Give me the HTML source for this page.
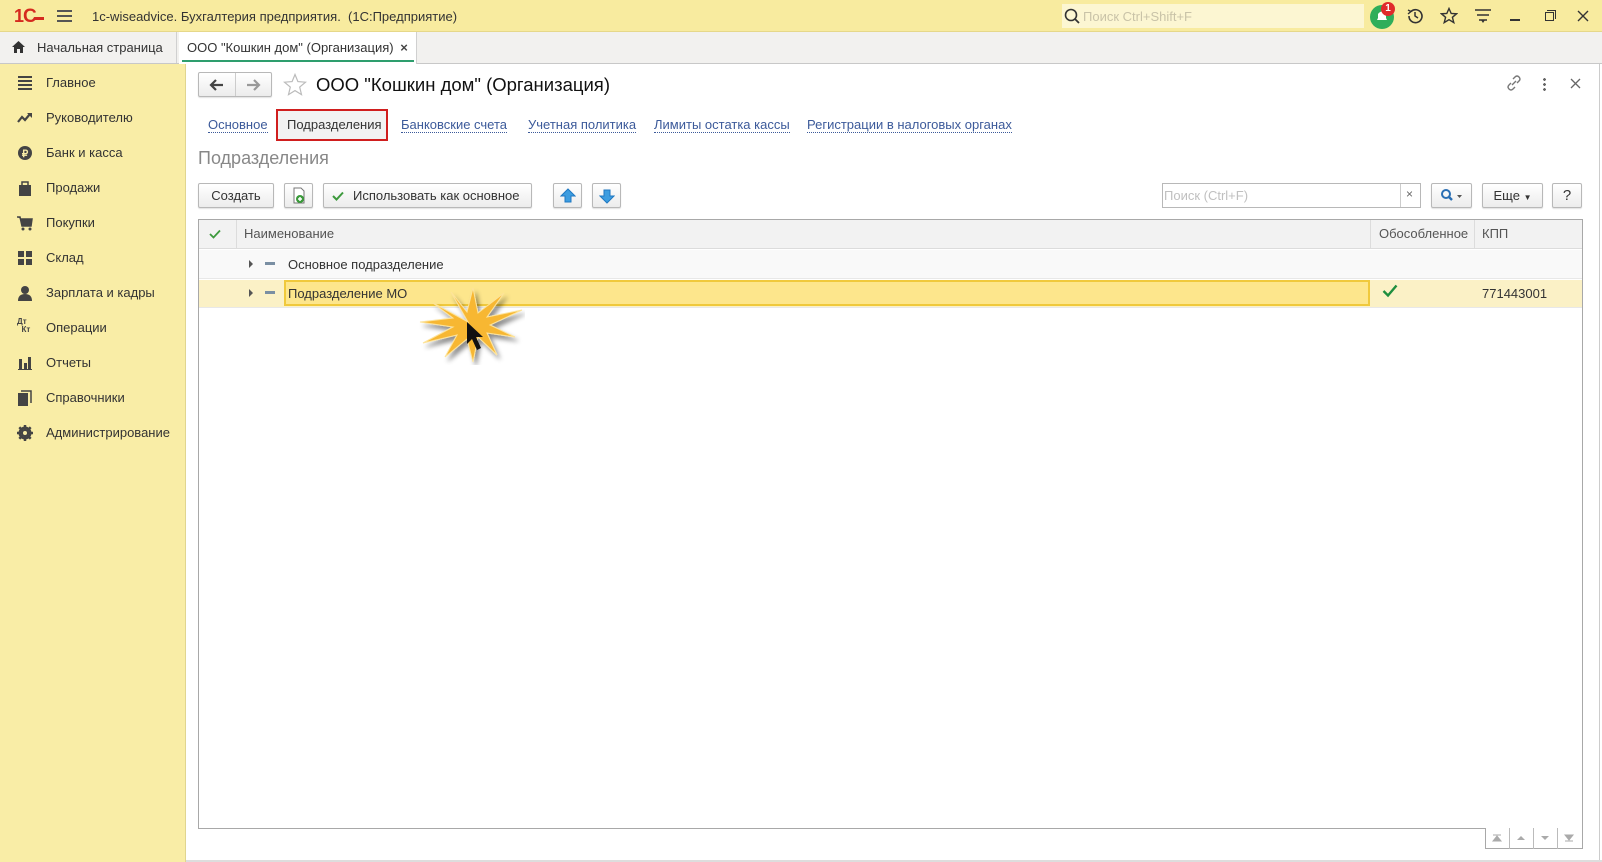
<!DOCTYPE html>
<html><head><meta charset="utf-8"><style>
*{box-sizing:border-box;margin:0;padding:0}
body{width:1602px;height:862px;overflow:hidden;background:#fff;font-family:"Liberation Sans",Arial,sans-serif;font-size:13px;color:#333;position:relative}
.abs{position:absolute}
#title{left:0;top:0;width:1602px;height:32px;background:#f8eb9f;border-bottom:1px solid #e6d88a}
#tabs{left:0;top:32px;width:1602px;height:32px;background:#f2f1ef;border-bottom:1px solid #c8c8c8}
#side{left:0;top:64px;width:186px;height:798px;background:#f9eda6;border-right:1px solid #e0d58f}
.si{position:absolute;left:46px;font-size:13px;color:#333}
.ic{position:absolute;left:17px;width:16px;height:16px}
.btn{position:absolute;height:25px;border:1px solid #b8b8b8;border-radius:2px;background:linear-gradient(#fff,#ececec);font-size:13px;color:#333;line-height:23px;text-align:center;box-shadow:0 1px 1px rgba(0,0,0,.12)}
.lk{position:absolute;top:117px;color:#3c5a9a;font-size:13px;border-bottom:1px dotted #3c5a9a;line-height:15px}
.th{position:absolute;top:219px;height:30px;line-height:30px;font-size:13px;color:#555;padding-left:8px}
</style></head><body>
<div id="title" class="abs">
 <div class="abs" style="left:14px;top:6px;font:bold 18px 'Liberation Sans';color:#d52a1f;letter-spacing:-1px">1<span style="font-size:19px">С</span><span style="display:inline-block;width:10px;height:3px;background:#d52a1f;vertical-align:2px;margin-left:-2px"></span></div>
 <div class="abs" style="left:57px;top:10px;width:15px;height:12px;border-top:2px solid #555;border-bottom:2px solid #555"><div style="margin-top:3px;height:2px;background:#555"></div></div>
 <div class="abs" style="left:92px;top:9px;font-size:13px;color:#333">1c-wiseadvice. Бухгалтерия предприятия.&nbsp; (1С:Предприятие)</div>
 <div class="abs" style="left:1062px;top:4px;width:302px;height:24px;background:#fcf6d2"></div>
 <svg class="abs" style="left:1064px;top:8px" width="16" height="16"><circle cx="7" cy="7" r="5.5" fill="none" stroke="#333" stroke-width="1.6"/><line x1="11" y1="11" x2="15" y2="15" stroke="#333" stroke-width="1.8"/></svg>
 <div class="abs" style="left:1083px;top:9px;font-size:13px;color:#c9c3a8">Поиск Ctrl+Shift+F</div>
 <div class="abs" style="left:1370px;top:5px;width:24px;height:24px;border-radius:50%;background:#2fae5a"></div>
 <svg class="abs" style="left:1374px;top:8px" width="16" height="16"><path d="M3 12 L4 10 L4 6 Q8 1 12 6 L12 10 L13 12 Z" fill="#fff"/></svg>
 <div class="abs" style="left:1381px;top:2px;width:14px;height:14px;border-radius:50%;background:#e02a2a;color:#fff;font:bold 10px 'Liberation Sans';text-align:center;line-height:14px">1</div>
 <svg class="abs" style="left:1406px;top:7px" width="18" height="18"><path d="M3 9 A6.5 6.5 0 1 0 5 4.5" fill="none" stroke="#333" stroke-width="1.6"/><path d="M2 3 L5 4.5 L2 7" fill="none" stroke="#333" stroke-width="1.4"/><path d="M9 5 L9 9 L12 11" fill="none" stroke="#333" stroke-width="1.5"/></svg>
 <svg class="abs" style="left:1440px;top:7px" width="18" height="18"><path d="M9 1.5 L11.2 6.5 L16.5 6.8 L12.4 10.3 L13.8 15.6 L9 12.7 L4.2 15.6 L5.6 10.3 L1.5 6.8 L6.8 6.5 Z" fill="none" stroke="#333" stroke-width="1.4"/></svg>
 <svg class="abs" style="left:1474px;top:8px" width="18" height="16"><path d="M1 2 H17 M3 7 H15 M5 12 H13" stroke="#333" stroke-width="1.5"/><path d="M7 12 L11 12 L9 15Z" fill="#333"/></svg>
 <div class="abs" style="left:1510px;top:19px;width:10px;height:1.5px;background:#333"></div>
 <div class="abs" style="left:1545px;top:12px;width:9px;height:9px;border:1.5px solid #333"></div><div class="abs" style="left:1547px;top:10px;width:9px;height:9px;border-top:1.5px solid #333;border-right:1.5px solid #333"></div>
 <svg class="abs" style="left:1577px;top:10px" width="12" height="12"><path d="M1 1L11 11M11 1L1 11" stroke="#333" stroke-width="1.4"/></svg>
</div>
<div id="tabs" class="abs">
 <svg class="abs" style="left:11px;top:8px" width="15" height="14"><path d="M7.5 1 L14 7 L12 7 L12 13 L9 13 L9 9 L6 9 L6 13 L3 13 L3 7 L1 7Z" fill="#333"/></svg>
 <div class="abs" style="left:37px;top:8px;font-size:13px">Начальная страница</div>
 <div class="abs" style="left:176px;top:0;width:1px;height:31px;background:#d0d0d0"></div>
 <div class="abs" style="left:179px;top:0;width:238px;height:32px;background:#fff;border-right:1px solid #d0d0d0"></div>
 <div class="abs" style="left:182px;top:28px;width:232px;height:2px;background:#2e9e6e"></div>
 <div class="abs" style="left:187px;top:8px;font-size:13px">ООО "Кошкин дом" (Организация) <b style="margin-left:3px;color:#444">×</b></div>
</div>
<div id="side" class="abs">
 <div class="si" style="top:11px">Главное</div>
 <div class="si" style="top:46px">Руководителю</div>
 <div class="si" style="top:81px">Банк и касса</div>
 <div class="si" style="top:116px">Продажи</div>
 <div class="si" style="top:151px">Покупки</div>
 <div class="si" style="top:186px">Склад</div>
 <div class="si" style="top:221px">Зарплата и кадры</div>
 <div class="si" style="top:256px">Операции</div>
 <div class="si" style="top:291px">Отчеты</div>
 <div class="si" style="top:326px">Справочники</div>
 <div class="si" style="top:361px">Администрирование</div>
 <svg class="ic" style="top:11px" width="16" height="16"><path d="M1 2H15M1 6H15M1 10H15M1 14H15" stroke="#444" stroke-width="2"/></svg>
 <svg class="ic" style="top:46px" width="16" height="16"><path d="M1 12 L5 7 L8 10 L13 4" fill="none" stroke="#444" stroke-width="2.2"/><path d="M10 3 L15 3 L15 8Z" fill="#444"/></svg>
 <svg class="ic" style="top:81px" width="16" height="16"><circle cx="8" cy="8" r="7" fill="#444"/><text x="8" y="12" font-size="10" font-weight="bold" fill="#f9eda6" text-anchor="middle" font-family="Liberation Sans">₽</text></svg>
 <svg class="ic" style="top:116px" width="16" height="16"><path d="M5 5 V2 H11 V5" fill="none" stroke="#444" stroke-width="1.5"/><rect x="2" y="5" width="12" height="11" fill="#444"/></svg>
 <svg class="ic" style="top:151px" width="16" height="16"><path d="M0 2 H3 L5 11 H14 L15 4 H4" fill="#444" stroke="#444" stroke-width="1.5"/><circle cx="6" cy="14" r="1.5" fill="#444"/><circle cx="13" cy="14" r="1.5" fill="#444"/></svg>
 <svg class="ic" style="top:186px" width="16" height="16"><path d="M1 1H7V7H1ZM9 1H15V7H9ZM1 9H7V15H1ZM9 9H15V15H9Z" fill="#444"/></svg>
 <svg class="ic" style="top:221px" width="16" height="16"><circle cx="8" cy="5" r="4" fill="#444"/><path d="M1 16 Q1 9 8 9 Q15 9 15 16Z" fill="#444"/></svg>
 <div class="abs" style="left:17px;top:254px;font:bold 8px 'Liberation Sans';color:#444;line-height:8px">Дт<br>&nbsp;&nbsp;Кт</div>
 <svg class="ic" style="top:291px" width="16" height="16"><path d="M2 4H5V14H2ZM7 8H10V14H7ZM11 2H14V14H11Z M1 14H15V15H1Z" fill="#444"/></svg>
 <svg class="ic" style="top:326px" width="16" height="16"><rect x="1" y="3" width="10" height="13" fill="#444"/><path d="M4 1H14V13" fill="none" stroke="#444" stroke-width="1.5"/></svg>
 <svg class="ic" style="top:361px" width="16" height="16"><circle cx="8" cy="8" r="5" fill="none" stroke="#444" stroke-width="3"/><path d="M8 0V16M0 8H16M2.3 2.3L13.7 13.7M13.7 2.3L2.3 13.7" stroke="#444" stroke-width="2.5"/><circle cx="8" cy="8" r="2" fill="#f9eda6"/></svg>
</div>
<!-- header -->
<div class="btn" style="left:198px;top:72px;width:74px;height:25px"></div>
<div class="abs" style="left:235px;top:73px;width:1px;height:23px;background:#ccc"></div>
<svg class="abs" style="left:209px;top:79px" width="16" height="12"><path d="M2 6H14M7 1L2 6L7 11" fill="none" stroke="#444" stroke-width="2.2"/></svg>
<svg class="abs" style="left:245px;top:79px" width="16" height="12"><path d="M2 6H14M9 1L14 6L9 11" fill="none" stroke="#999" stroke-width="2.2"/></svg>
<svg class="abs" style="left:283px;top:73px" width="24" height="24"><path d="M12 1.5 L14.9 8.6 L22.5 9.2 L16.7 14.1 L18.5 21.6 L12 17.6 L5.5 21.6 L7.3 14.1 L1.5 9.2 L9.1 8.6 Z" fill="none" stroke="#bbb" stroke-width="1.2"/></svg>
<div class="abs" style="left:316px;top:74px;font-size:18.5px;color:#111">ООО "Кошкин дом" (Организация)</div>
<svg class="abs" style="left:1506px;top:75px" width="16" height="16"><path d="M6 10 L10 6 M7 4 L9 2 Q11 0 13 2 Q15 4 13 6 L11 8 M9 12 L7 14 Q5 16 3 14 Q1 12 3 10 L5 8" fill="none" stroke="#777" stroke-width="1.4"/></svg>
<div class="abs" style="left:1543px;top:77px;width:3px;height:14px;background:radial-gradient(circle,#666 1.3px,transparent 1.5px) 0 0/3px 5px"></div>
<svg class="abs" style="left:1570px;top:78px" width="11" height="11"><path d="M1 1L10 10M10 1L1 10" stroke="#666" stroke-width="1.3"/></svg>
<!-- tabs links -->
<div class="lk" style="left:208px">Основное</div>
<div class="abs" style="left:276px;top:109px;width:112px;height:32px;border:2px solid #d01e1e;background:#f2f2f2"></div>
<div class="abs" style="left:287px;top:117px;font-size:13px;color:#333">Подразделения</div>
<div class="lk" style="left:401px">Банковские счета</div>
<div class="lk" style="left:528px">Учетная политика</div>
<div class="lk" style="left:654px">Лимиты остатка кассы</div>
<div class="lk" style="left:807px">Регистрации в налоговых органах</div>
<div class="abs" style="left:198px;top:148px;font-size:18px;color:#888">Подразделения</div>
<!-- toolbar -->
<div class="btn" style="left:198px;top:183px;width:76px">Создать</div>
<div class="btn" style="left:284px;top:183px;width:29px"><svg width="14" height="18" style="margin-top:3px"><path d="M2 1H9L12 4V16H2Z" fill="#fff" stroke="#777"/><circle cx="8" cy="12" r="4" fill="#3a9a3a"/><path d="M6 12H10M8 10V14" stroke="#fff" stroke-width="1.5"/></svg></div>
<div class="btn" style="left:323px;top:183px;width:209px;text-align:left;padding-left:29px">Использовать как основное</div>
<svg class="abs" style="left:332px;top:191px" width="12" height="10"><path d="M1 5L4.5 8.5L11 1.5" fill="none" stroke="#3d9a3d" stroke-width="2"/></svg>
<div class="btn" style="left:553px;top:183px;width:29px"><svg width="16" height="16" style="margin-top:4px"><path d="M8 1L15 8H11V14H5V8H1Z" fill="#3d9de0" stroke="#1f78c2"/></svg></div>
<div class="btn" style="left:592px;top:183px;width:29px"><svg width="16" height="16" style="margin-top:4px"><path d="M8 15L15 8H11V2H5V8H1Z" fill="#3d9de0" stroke="#1f78c2"/></svg></div>
<div class="abs" style="left:1162px;top:183px;width:259px;height:25px;border:1px solid #b8b8b8;background:#fff"></div>
<div class="abs" style="left:1164px;top:188px;color:#c0c0c0;font-size:13px">Поиск (Ctrl+F)</div>
<div class="abs" style="left:1400px;top:184px;width:1px;height:23px;background:#ccc"></div>
<div class="abs" style="left:1406px;top:187px;color:#666;font-size:12px">×</div>
<div class="btn" style="left:1431px;top:183px;width:41px"><svg width="24" height="14" style="margin-top:4px"><circle cx="6" cy="6" r="4" fill="none" stroke="#2a6fb4" stroke-width="2"/><path d="M9 9L12 12" stroke="#2a6fb4" stroke-width="2.4"/><path d="M17 7H22L19.5 10Z" fill="#555"/></svg></div>
<div class="btn" style="left:1482px;top:183px;width:61px">Еще <span style="font-size:8px">▼</span></div>
<div class="btn" style="left:1552px;top:183px;width:30px;font-size:15px">?</div>
<!-- table -->
<div class="abs" style="left:198px;top:219px;width:1385px;height:610px;border:1px solid #a8a8a8"></div>
<div class="abs" style="left:199px;top:220px;width:1383px;height:29px;background:#f2f2f2;border-bottom:1px solid #dcdcdc"></div>
<div class="abs" style="left:236px;top:220px;width:1px;height:29px;background:#dcdcdc"></div>
<div class="abs" style="left:1370px;top:220px;width:1px;height:29px;background:#dcdcdc"></div>
<div class="abs" style="left:1474px;top:220px;width:1px;height:29px;background:#dcdcdc"></div>
<svg class="abs" style="left:209px;top:229px" width="12" height="10"><path d="M1 5L4.5 8.5L11 1.5" fill="none" stroke="#3d9a3d" stroke-width="1.8"/></svg>
<div class="th" style="left:236px">Наименование</div>
<div class="th" style="left:1371px">Обособленное</div>
<div class="th" style="left:1474px">КПП</div>
<div class="abs" style="left:199px;top:250px;width:1383px;height:29px;background:#f9f9f9;border-bottom:1px solid #e8e8e8"></div>
<div class="abs" style="left:199px;top:280px;width:1383px;height:28px;background:#fbf1c6;border-bottom:1px solid #e8e8e8"></div>
<div class="abs" style="left:284px;top:280px;width:1086px;height:26px;background:#fde68c;border:2px solid #f0c93c"></div>
<div class="abs" style="left:249px;top:260px;width:0;height:0;border-left:4px solid #555;border-top:4px solid transparent;border-bottom:4px solid transparent"></div>
<div class="abs" style="left:249px;top:289px;width:0;height:0;border-left:4px solid #555;border-top:4px solid transparent;border-bottom:4px solid transparent"></div>
<div class="abs" style="left:265px;top:262px;width:10px;height:3px;background:#7a8fa3"></div>
<div class="abs" style="left:265px;top:291px;width:10px;height:3px;background:#7a8fa3"></div>
<div class="abs" style="left:288px;top:257px;font-size:13px;color:#333">Основное подразделение</div>
<div class="abs" style="left:288px;top:286px;font-size:13px;color:#333">Подразделение МО</div>
<svg class="abs" style="left:1382px;top:284px" width="16" height="14"><path d="M1.5 7L6 11.5L14.5 1.5" fill="none" stroke="#1e8e3e" stroke-width="2.4"/></svg>
<div class="abs" style="left:1482px;top:286px;font-size:13px;color:#333">771443001</div>
<!-- starburst -->
<svg class="abs" style="left:415px;top:285px" width="110" height="80">
 <defs><filter id="sh"><feDropShadow dx="3" dy="4" stdDeviation="2.5" flood-color="#000" flood-opacity=".45"/></filter></defs>
 <polygon filter="url(#sh)" fill="#f7b733" stroke="#fde39a" stroke-width="1" points="53,37 36,7 52,27 58,3 63,28 89,8 72,32 107,25 75,40 100,52 72,48 82,70 63,52 58,77 52,54 30,72 42,50 8,58 38,42 5,37 38,33 18,18"/>
 <path d="M52 37 L52 59 L57 54 L62 65 L66 63 L61 52 L68 52 Z" fill="#111"/>
</svg>
<!-- bottom nav -->
<div class="abs" style="left:1485px;top:828px;width:98px;height:21px;border:1px solid #a8a8a8;border-top:none;background:#fff"></div>
<div class="abs" style="left:1509px;top:828px;width:1px;height:21px;background:#bbb"></div>
<div class="abs" style="left:1533px;top:828px;width:1px;height:21px;background:#bbb"></div>
<div class="abs" style="left:1557px;top:828px;width:1px;height:21px;background:#bbb"></div>
<svg class="abs" style="left:1485px;top:830px" width="98" height="16"><path d="M8 5H16M8 11L12 6L16 11Z" fill="#aaa" stroke="#aaa"/><path d="M32 10L36 6L40 10Z" fill="#aaa"/><path d="M56 6L60 10L64 6Z" fill="#aaa"/><path d="M80 5L84 10L88 5Z M80 11H88" fill="#aaa" stroke="#aaa"/></svg>
<div class="abs" style="left:1599px;top:64px;width:1px;height:798px;background:#ccc"></div>
<div class="abs" style="left:186px;top:860px;width:1416px;height:2px;background:#ddd"></div>
</body></html>
